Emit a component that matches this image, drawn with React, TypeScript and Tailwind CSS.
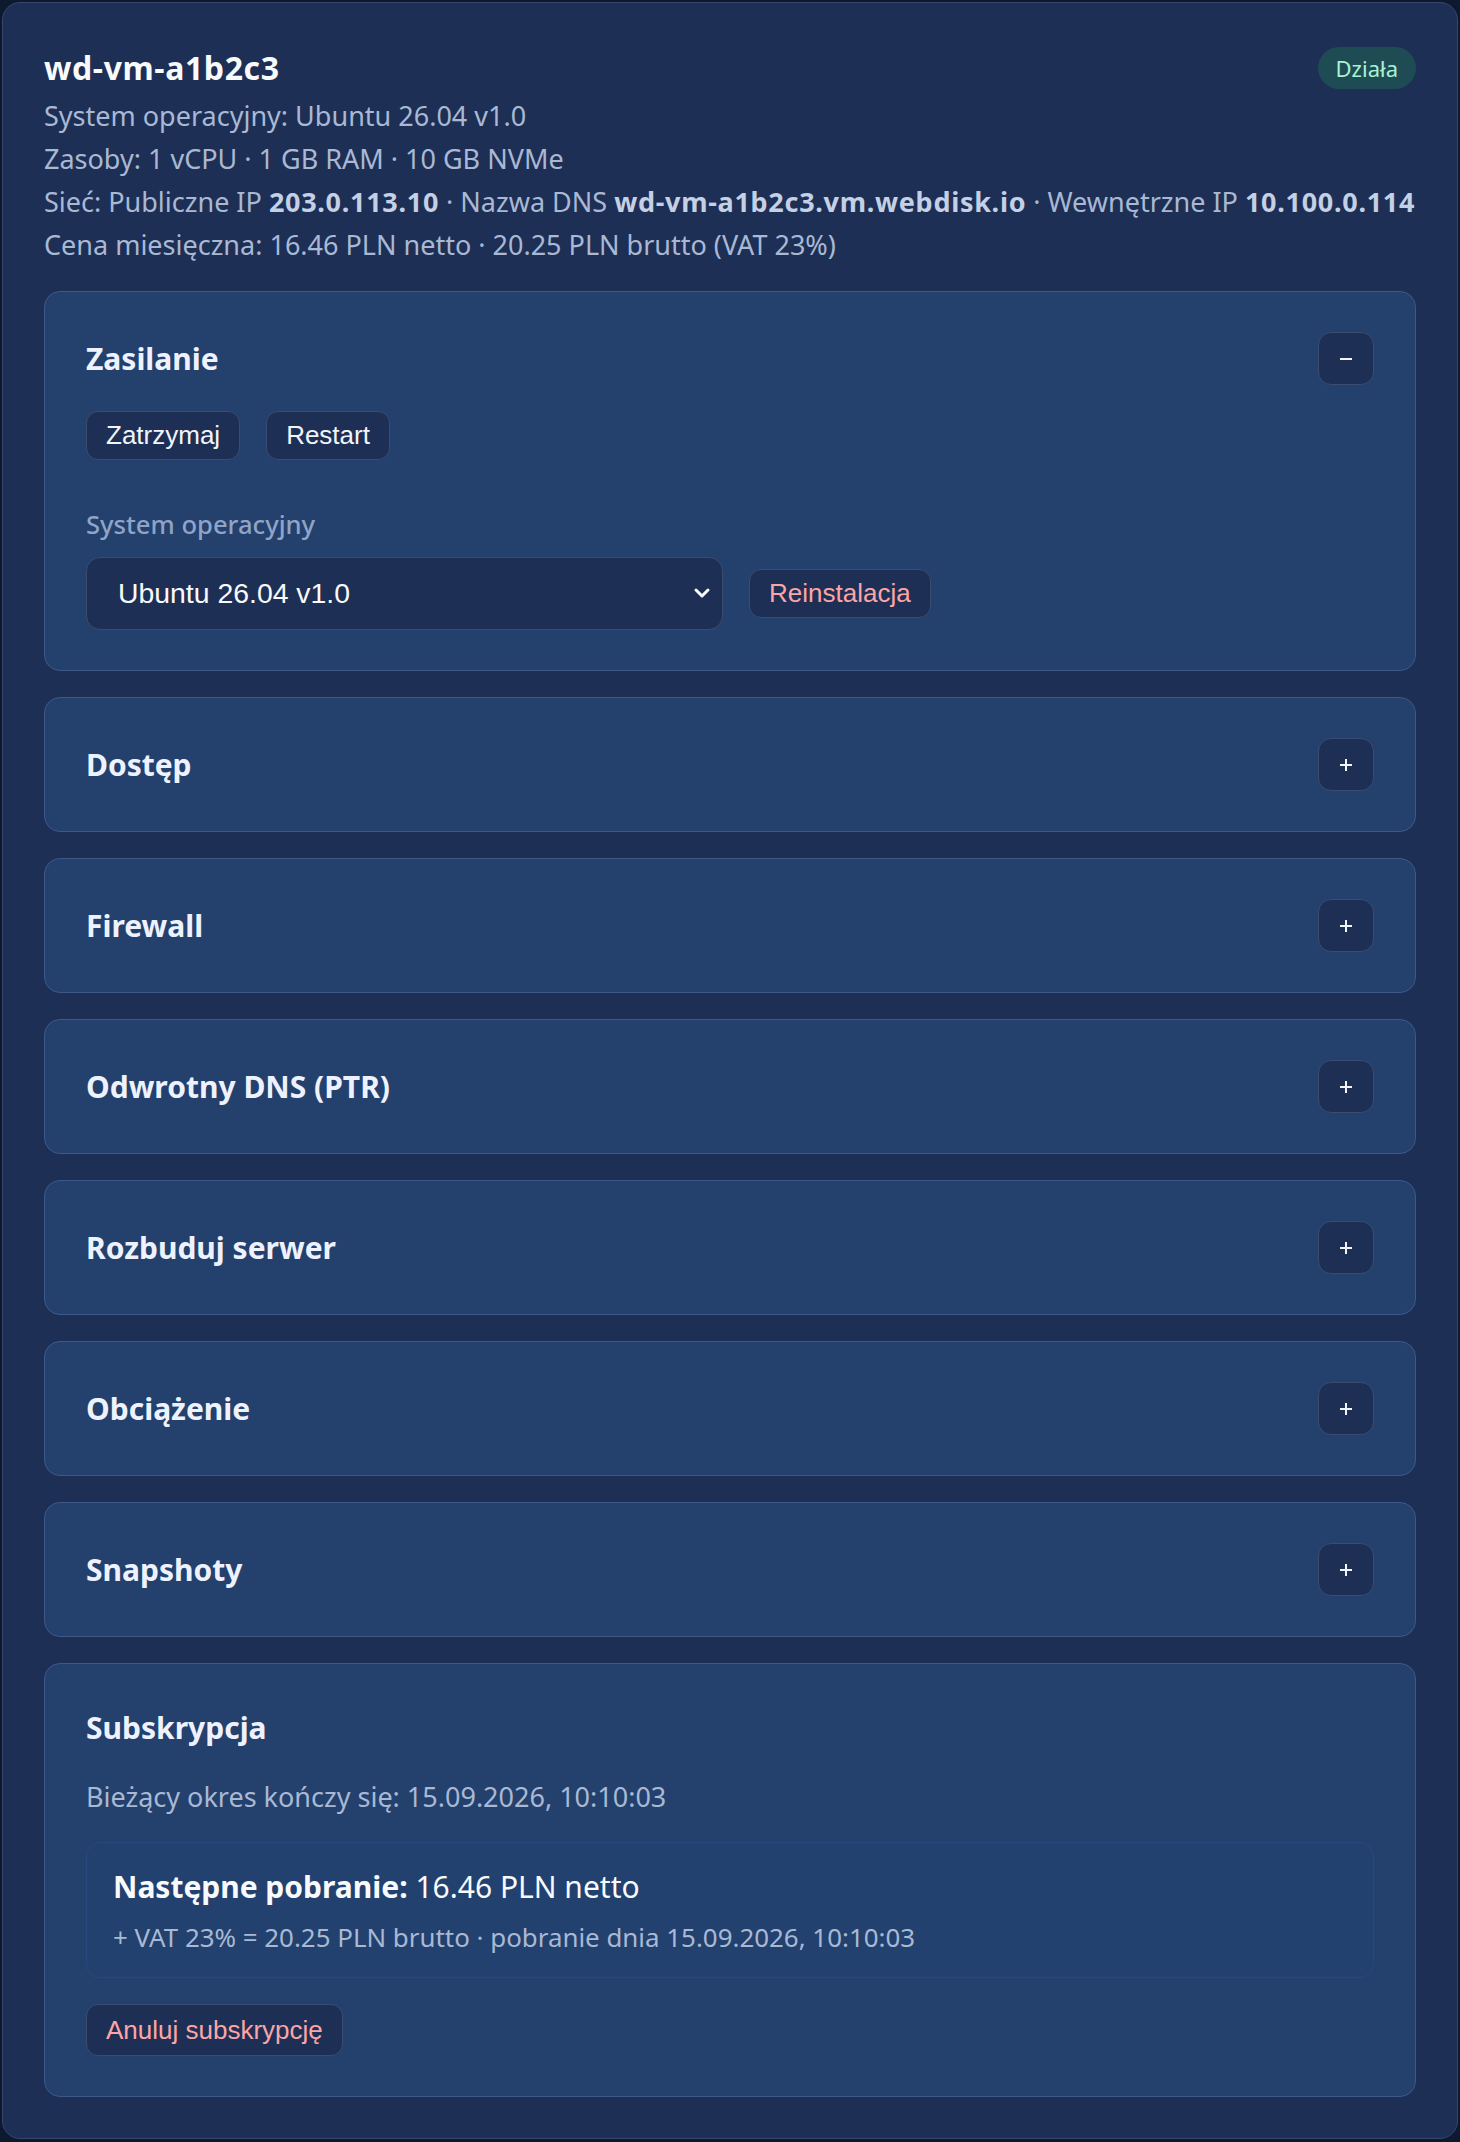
import { useState } from 'react';

const sans = { fontFamily: '"Segoe UI", "Noto Sans", Lato, sans-serif' };
const arial = { fontFamily: '"Liberation Sans", Arial, sans-serif' };

const sections = [
    'Dostęp',
    'Firewall',
    'Odwrotny DNS (PTR)',
    'Rozbuduj serwer',
    'Obciążenie',
    'Snapshoty',
];

function ToggleButton({ open, onClick }: { open: boolean; onClick: () => void }) {
    return (
        <button
            onClick={onClick}
            className="flex h-[53px] w-[56px] items-center justify-center rounded-[13px] border border-[#3a4c70] bg-[#1e2f56] text-[#f1f5f9]"
        >
            {open ? (
                <svg width="14" height="14" viewBox="0 0 14 14"><path d="M1 7h12" stroke="currentColor" strokeWidth="2" /></svg>
            ) : (
                <svg width="14" height="14" viewBox="0 0 14 14"><path d="M1 7h12M7 1v12" stroke="currentColor" strokeWidth="2" /></svg>
            )}
        </button>
    );
}

function Panel({ title, children, toggle = true }: { title: string; children?: React.ReactNode; toggle?: boolean }) {
    const [open, setOpen] = useState(!!children && toggle);
    return (
        <div className="rounded-[16px] border border-[#3e5887] bg-[#24406d] px-[41px] py-[40px]">
            <div className="flex items-center justify-between">
                <h2 className="text-[30px] font-bold leading-[48px] text-[#eef2ff]">{title}</h2>
                {toggle && <ToggleButton open={open} onClick={() => setOpen(!open)} />}
            </div>
            {(open || !toggle) && children}
        </div>
    );
}

export default function App() {
    return (
        <div className="min-h-screen bg-[#0e1930] px-[2px] pt-[2px]" style={sans}>
            <div className="rounded-[18px] border border-[#34476d] bg-[#1e2f56] px-[41px] pb-[41px] pt-[42px]">
                {/* Header */}
                <div className="flex items-center justify-between">
                    <h1 className="text-[32px] font-bold leading-[46px] tracking-[0.6px] text-[#f8fafc]">wd-vm-a1b2c3</h1>
                    <span className="flex h-[42px] items-center rounded-full bg-[#1f4b55] px-[18px] text-[22px] text-[#a7f3d0]">Działa</span>
                </div>
                <div className="mt-[3px] text-[27px] leading-[43px] text-[#a9b9d3]">
                    <p>System operacyjny: Ubuntu 26.04 v1.0</p>
                    <p>Zasoby: 1 vCPU · 1 GB RAM · 10 GB NVMe</p>
                    <p>
                        Sieć: Publiczne IP <b className="tracking-[0.7px] text-[#c4d0e4]">203.0.113.10</b> · Nazwa DNS{' '}
                        <b className="tracking-[0.7px] text-[#c4d0e4]">wd-vm-a1b2c3.vm.webdisk.io</b> · Wewnętrzne IP{' '}
                        <b className="tracking-[0.7px] text-[#c4d0e4]">10.100.0.114</b>
                    </p>
                    <p>Cena miesięczna: 16.46 PLN netto · 20.25 PLN brutto (VAT 23%)</p>
                </div>

                {/* Panels */}
                <div className="mt-[25px] flex flex-col gap-[26px]">
                    <Panel title="Zasilanie">
                        <div className="mt-[26px] flex gap-[26px]" style={arial}>
                            <button className="h-[49px] rounded-[12px] border border-[#3a4c70] bg-[#1e2f56] px-[19px] text-[26px] text-[#f1f5f9]">Zatrzymaj</button>
                            <button className="h-[49px] rounded-[12px] border border-[#3a4c70] bg-[#1e2f56] px-[19px] text-[26px] text-[#f1f5f9]">Restart</button>
                        </div>
                        <label className="mt-[46px] block text-[25.6px] font-medium leading-[38px] text-[#8fa4c6]">System operacyjny</label>
                        <div className="mt-[13px] flex items-center gap-[26px]" style={arial}>
                            <div className="relative w-[637px]">
                                <select className="h-[73px] w-full appearance-none rounded-[14px] border border-[#3a4c70] bg-[#1e2f56] pl-[31px] text-[28.4px] text-[#f8fafc] outline-none">
                                    <option>Ubuntu 26.04 v1.0</option>
                                </select>
                                <svg className="pointer-events-none absolute right-[12px] top-[28px]" width="18" height="16" viewBox="0 0 18 16">
                                    <path d="M3 5l6 6 6-6" fill="none" stroke="#f8fafc" strokeWidth="3" strokeLinecap="round" strokeLinejoin="round" />
                                </svg>
                            </div>
                            <button className="h-[49px] rounded-[12px] border border-[#3a4c70] bg-[#1e2f56] px-[19px] text-[26px] text-[#fca5a5]">Reinstalacja</button>
                        </div>
                    </Panel>

                    {sections.map((s) => (
                        <Panel key={s} title={s}>
                            {null}
                        </Panel>
                    ))}

                    <Panel title="Subskrypcja" toggle={false}>
                        <p className="mt-[23px] text-[27px] leading-[43px] text-[#a9b9d3]">Bieżący okres kończy się: 15.09.2026, 10:10:03</p>
                        <div className="mt-[24px] flex flex-col gap-[10px] rounded-[14px] border border-[#27497f] bg-[#22416f] px-[26px] pb-[20px] pt-[24px]">
                            <p className="text-[30px] leading-[40px] text-[#f8fafc]">
                                <b>Następne pobranie:</b> 16.46 PLN netto
                            </p>
                            <p className="text-[25.9px] leading-[40px] text-[#a9b9d3]">+ VAT 23% = 20.25 PLN brutto · pobranie dnia 15.09.2026, 10:10:03</p>
                        </div>
                        <button className="mt-[26px] h-[52px] rounded-[12px] border border-[#3a4c70] bg-[#1e2f56] px-[19px] text-[26px] text-[#fca5a5]" style={arial}>
                            Anuluj subskrypcję
                        </button>
                    </Panel>
                </div>
            </div>
        </div>
    );
}
